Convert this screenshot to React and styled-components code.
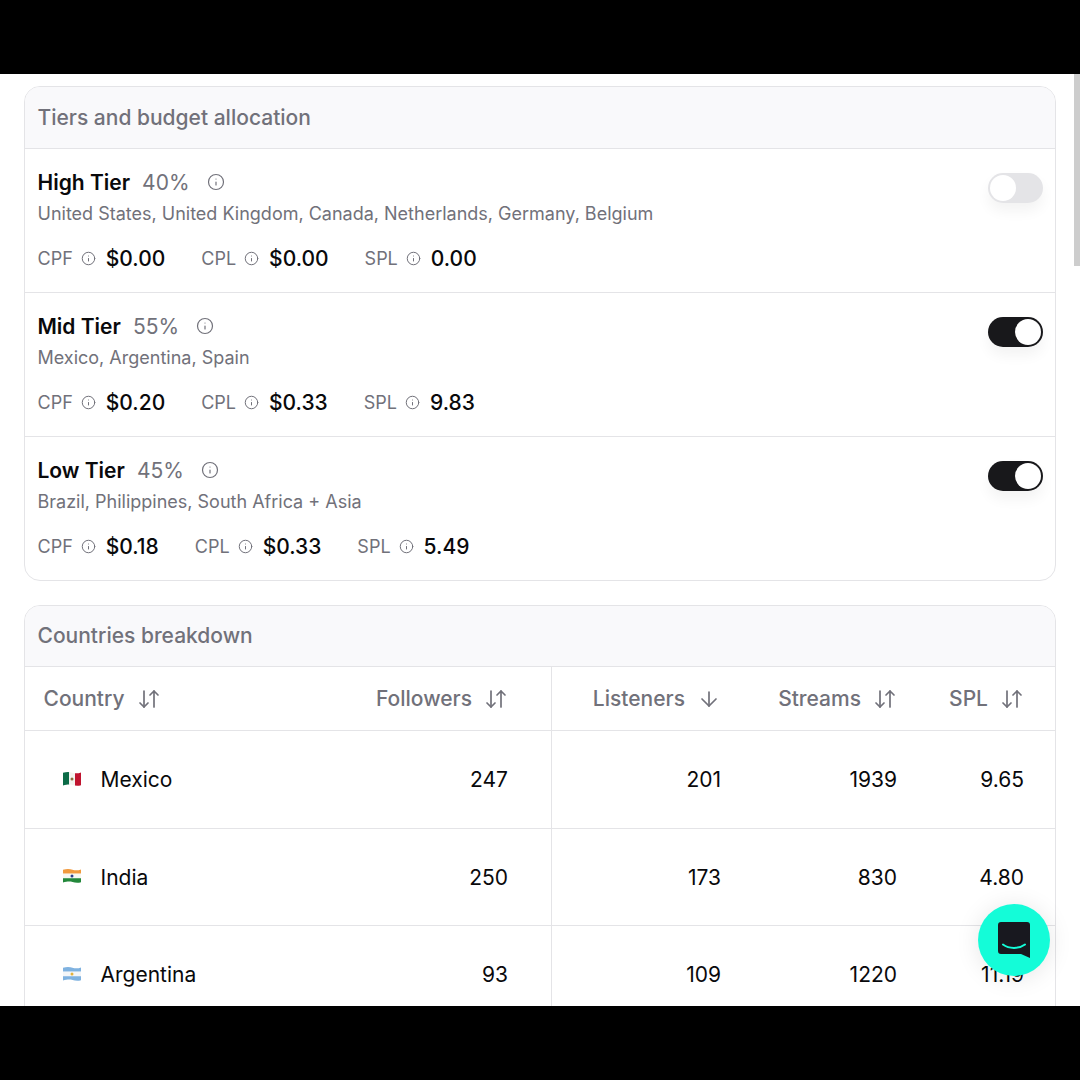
import React from "react";
import styled, { createGlobalStyle } from "styled-components";
import { ArrowDown, ArrowDownUp, Info } from "lucide-react";

const Global = createGlobalStyle`
  html, body { margin: 0; padding: 0; background: #000; }
  body { font-family: Inter, "Liberation Sans", sans-serif; -webkit-font-smoothing: antialiased; }
  * { box-sizing: border-box; }
`;

const Frame = styled.div`
  width: 1080px;
  height: 1080px;
  display: flex;
  flex-direction: column;
  background: #000;
  overflow: hidden;
`;
const BlackBar = styled.div`
  flex: 0 0 74px;
  background: #000;
`;
const Viewport = styled.main`
  position: relative;
  flex: 0 0 932px;
  background: #fff;
  overflow: hidden;
  padding: 12px 24px 0;
  display: flex;
  flex-direction: column;
  gap: 24px;
`;
const ScrollThumb = styled.div`
  position: absolute;
  top: 0;
  right: 0;
  width: 6px;
  height: 192px;
  background: #cdcdcd;
`;
const Card = styled.section`
  border: 1px solid #e4e4e7;
  border-radius: 16px;
  overflow: hidden;
  background: #fff;
  flex: none;
`;
const CardHeader = styled.h2`
  margin: 0;
  height: ${(p) => p.$h}px;
  padding: 0 12.5px ${(p) => p.$lift || 0}px;
  display: flex;
  align-items: center;
  background: #f9f9fb;
  border-bottom: 1px solid #e4e4e7;
  font-size: 21px;
  font-weight: 500;
  color: #71717a;
`;
const Tier = styled.div`
  height: 144px;
  padding: 17px 12px 0 12.5px;
  display: flex;
  justify-content: space-between;
  align-items: flex-start;
  border-bottom: 1px solid #e4e4e7;
  &:last-child { border-bottom: 0; height: 143px; }
`;
const TierBody = styled.div`
  display: flex;
  flex-direction: column;
`;
const TierTitle = styled.div`
  display: flex;
  align-items: center;
  height: 32px;
  color: #71717a;
`;
const TierName = styled.span`
  font-size: 21px;
  font-weight: 600;
  color: #09090b;
  margin-right: 12px;
`;
const TierShare = styled.span`
  font-size: 21px;
  font-weight: 400;
  color: #71717a;
  margin-right: 17px;
`;
const TierCountries = styled.div`
  margin-top: 3px;
  height: 26px;
  line-height: 26px;
  font-size: 18px;
  color: #71717a;
`;
const Stats = styled.div`
  display: flex;
  align-items: center;
  gap: 36px;
  margin-top: 16px;
  height: 30px;
`;
const Stat = styled.div`
  display: flex;
  align-items: center;
  color: #71717a;
`;
const StatLabel = styled.span`
  font-size: 18px;
  color: #71717a;
  margin-right: 8px;
`;
const StatValue = styled.span`
  font-size: 21px;
  font-weight: 500;
  color: #09090b;
  margin-left: 10px;
`;
const Toggle = styled.div`
  width: 55px;
  height: 30px;
  margin-top: 7px;
  border-radius: 15px;
  padding: 2px;
  display: flex;
  justify-content: ${(p) => (p.$on ? "flex-end" : "flex-start")};
  background: ${(p) => (p.$on ? "#18181b" : "#e4e4e7")};
  box-shadow: 0 8px 14px rgba(0, 0, 0, 0.05);
`;
const Knob = styled.div`
  width: 26px;
  height: 26px;
  border-radius: 50%;
  background: #fff;
`;
const TableRow = styled.div`
  display: grid;
  grid-template-columns: 273px 254px 185px 176px 1fr;
  height: ${(p) => p.$h}px;
  border-bottom: 1px solid #e4e4e7;
`;
const HeadCell = styled.div`
  display: flex;
  align-items: center;
  justify-content: ${(p) => (p.$left ? "flex-start" : "flex-end")};
  gap: 12px;
  padding: ${(p) => p.$pad};
  font-size: 21px;
  font-weight: 500;
  color: #71717a;
  border-right: ${(p) => (p.$divider ? "1px solid #e4e4e7" : "0")};
`;
const Cell = styled.div`
  display: flex;
  align-items: center;
  justify-content: flex-end;
  padding: ${(p) => p.$pad};
  font-size: 21px;
  font-weight: 400;
  color: #09090b;
  border-right: ${(p) => (p.$divider ? "1px solid #e4e4e7" : "0")};
`;
const CountryCell = styled(Cell)`
  justify-content: flex-start;
  gap: 19px;
`;
const FlagBox = styled.svg`
  flex: none;
  width: 20px;
  height: 16px;
  margin-top: -2px;
`;
const Launcher = styled.div`
  position: absolute;
  left: 978px;
  top: 830px;
  width: 72px;
  height: 72px;
  border-radius: 50%;
  background: #14fcd8;
  display: flex;
  align-items: center;
  justify-content: center;
  box-shadow: 0 2px 24px rgba(0, 0, 0, 0.1);
`;

const WAVE = "M1 1.8C5 .6 8 1 10.5 1.7S16 2.6 19 1.4V14.2C15.5 15.2 13 14.6 10.5 14S5 13.4 1 14.6Z";

const Flag = ({ id, colors, vertical, dot }) => (
  <FlagBox viewBox="0 0 20 16">
    <clipPath id={id}>
      <path d={WAVE} />
    </clipPath>
    <g clipPath={`url(#${id})`}>
      {colors.map((c, i) =>
        vertical ? (
          <rect key={i} x={1 + (i * 18) / 3} y="0" width="6.2" height="16" fill={c} />
        ) : (
          <rect key={i} x="0" y={0.9 + (i * 14) / 3} width="20" height="4.9" fill={c} />
        )
      )}
      <circle cx="10" cy="8" r="1.5" fill={dot} />
    </g>
  </FlagBox>
);

const tiers = [
  { name: "High Tier", share: "40%", countries: "United States, United Kingdom, Canada, Netherlands, Germany, Belgium", cpf: "$0.00", cpl: "$0.00", spl: "0.00", on: false },
  { name: "Mid Tier", share: "55%", countries: "Mexico, Argentina, Spain", cpf: "$0.20", cpl: "$0.33", spl: "9.83", on: true },
  { name: "Low Tier", share: "45%", countries: "Brazil, Philippines, South Africa + Asia", cpf: "$0.18", cpl: "$0.33", spl: "5.49", on: true },
];

const rows = [
  { name: "Mexico", flag: { colors: ["#0b6b47", "#f4f4f0", "#c0142f"], vertical: true, dot: "#8a6d3b" }, f: "247", l: "201", s: "1939", spl: "9.65", h: 98 },
  { name: "India", flag: { colors: ["#f19a3e", "#f7f7f2", "#23883b"], dot: "#2b3f8c" }, f: "250", l: "173", s: "830", spl: "4.80", h: 97 },
  { name: "Argentina", flag: { colors: ["#7fb2e0", "#f4f6f8", "#7fb2e0"], dot: "#e3b23c" }, f: "93", l: "109", s: "1220", spl: "11.19", h: 98 },
];

const Sort = () => <ArrowDownUp size={24} strokeWidth={1.7} />;

export default function App() {
  return (
    <Frame>
      <Global />
      <BlackBar />
      <Viewport>
        <Card>
          <CardHeader $h={62}>Tiers and budget allocation</CardHeader>
          {tiers.map((t) => (
            <Tier key={t.name}>
              <TierBody>
                <TierTitle>
                  <TierName>{t.name}</TierName>
                  <TierShare>{t.share}</TierShare>
                  <Info size={18} strokeWidth={1.6} />
                </TierTitle>
                <TierCountries>{t.countries}</TierCountries>
                <Stats>
                  {[["CPF", t.cpf], ["CPL", t.cpl], ["SPL", t.spl]].map(([label, value]) => (
                    <Stat key={label}>
                      <StatLabel>{label}</StatLabel>
                      <Info size={15} strokeWidth={1.6} />
                      <StatValue>{value}</StatValue>
                    </Stat>
                  ))}
                </Stats>
              </TierBody>
              <Toggle $on={t.on}>
                <Knob />
              </Toggle>
            </Tier>
          ))}
        </Card>
        <Card>
          <CardHeader $h={61} $lift={2}>Countries breakdown</CardHeader>
          <TableRow $h={64}>
            <HeadCell $left $pad="0 0 0 18.5px">Country <Sort /></HeadCell>
            <HeadCell $divider $pad="0 43px 0 0">Followers <Sort /></HeadCell>
            <HeadCell $pad="0 16px 0 0">Listeners <ArrowDown size={24} strokeWidth={1.7} /></HeadCell>
            <HeadCell $pad="0 16px 0 0">Streams <Sort /></HeadCell>
            <HeadCell $pad="0 31px 0 0">SPL <Sort /></HeadCell>
          </TableRow>
          {rows.map((r) => (
            <TableRow key={r.name} $h={r.h}>
              <CountryCell $pad="0 0 0 36.5px">
                <Flag id={`flag-${r.name}`} {...r.flag} />
                {r.name}
              </CountryCell>
              <Cell $divider $pad="0 43px 0 0">{r.f}</Cell>
              <Cell $pad="0 16px 0 0">{r.l}</Cell>
              <Cell $pad="0 16px 0 0">{r.s}</Cell>
              <Cell $pad="0 31px 0 0">{r.spl}</Cell>
            </TableRow>
          ))}
        </Card>
        <ScrollThumb />
        <Launcher>
          <svg width="32" height="36" viewBox="0 0 32 36">
            <path d="M3 0H29a3 3 0 0 1 3 3V36L23 32H3a3 3 0 0 1-3-3V3a3 3 0 0 1 3-3Z" fill="#18181f" />
            <path d="M5 22.5C11 27 21 27 27 22.5" fill="none" stroke="#14fcd8" strokeWidth="2" strokeLinecap="round" />
          </svg>
        </Launcher>
      </Viewport>
      <BlackBar />
    </Frame>
  );
}
